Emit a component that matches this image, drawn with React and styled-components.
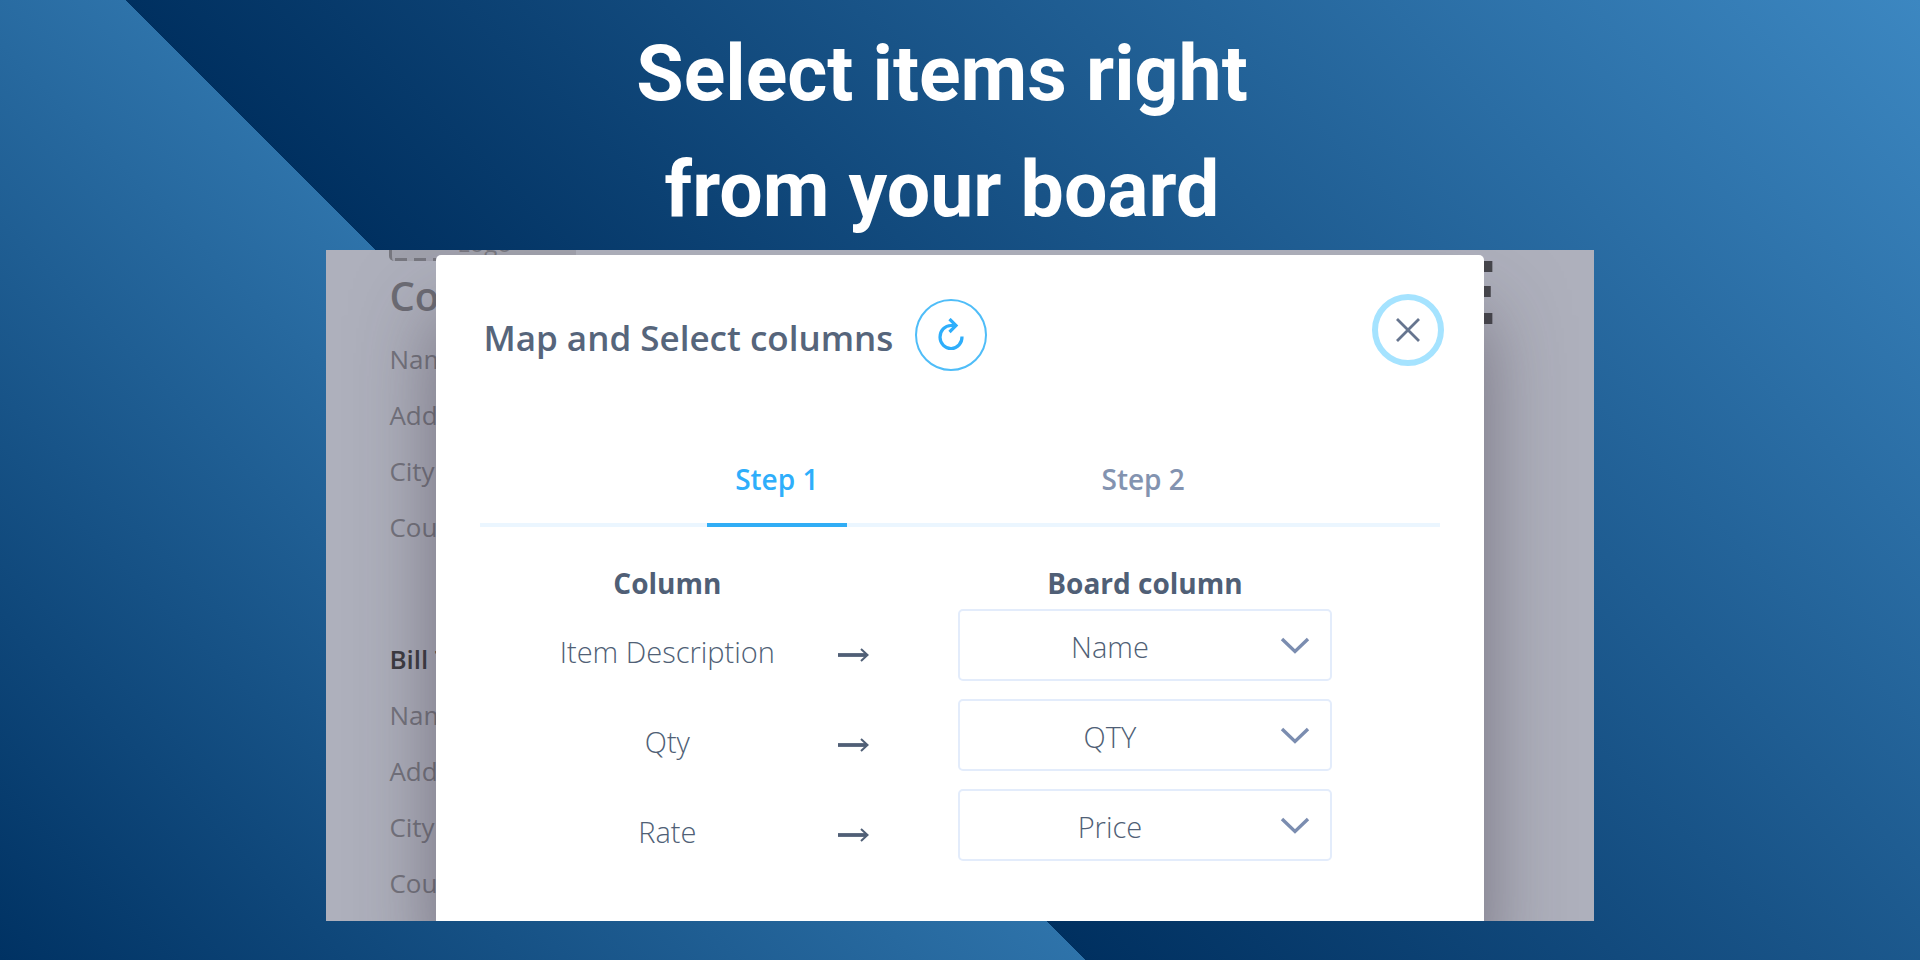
import styled, { createGlobalStyle } from 'styled-components'
import { useState } from 'react'

const GlobalStyle = createGlobalStyle`
    * {
        box-sizing:border-box;
    }

    body {
        margin:0;
        font-family:"Open Sans", "Noto Sans", sans-serif;
    }

    button, select {
        font-family:inherit;
    }
`

const Page = styled.main`
    display:flex;
    min-height:100vh;
    padding-bottom:39px;
    align-items:center;
    flex-direction:column;
    background:linear-gradient(45deg, #003263 0%, #2e73aa 37.7%, #003060 37.7%, #3c87c1 100%);
`

const Headline = styled.h1`
    margin:0;
    color:#fff;
    width:100%;
    height:250px;
    font-size:77px;
    font-weight:700;
    line-height:116px;
    text-align:center;
    padding:16px 36px 0 0;
    font-family:Roboto, sans-serif;
`

const Frame = styled.section`
    flex:1;
    width:66%;
    display:grid;
    overflow:hidden;
    background:#aeb0bc;
`

const Invoice = styled.div`
    display:flex;
    grid-area:1/1;
    padding:0 96px 0 63px;
    justify-content:space-between;
`

const LogoBox = styled.div`
    width:187px;
    height:11px;
    display:flex;
    color:#77777f;
    overflow:hidden;
    font-size:24px;
    line-height:26px;
    padding-bottom:5px;
    align-items:flex-end;
    justify-content:center;
    border-left:3px solid #77777f;
    border-bottom-left-radius:5px;
    background:repeating-linear-gradient(90deg, #77777f 0 12px, #a0a1ac 12px 19px) 3px 100%/100% 3px no-repeat #a0a1ac;
`

const Company = styled.h2`
    margin:0;
    color:#6c6c74;
    font-size:40px;
    font-weight:600;
    line-height:70px;
`

const Line = styled.p`
    margin:0;
    font-size:26px;
    line-height:56px;
    color:${props => props.$strong ? '#3b3b40' : '#74747d'};
    font-weight:${props => props.$strong ? 600 : 400};
`

const Address = styled.div`
    margin-bottom:76px;
`

const InvoiceTitle = styled.h2`
    margin:0;
    color:#46464c;
    font-size:88px;
    font-weight:700;
    line-height:80px;
`

const Overlay = styled.div`
    z-index:1;
    display:flex;
    grid-area:1/1;
    padding:5px 110px 0;
`

const Modal = styled.div`
    flex:1;
    background:#fff;
    padding:0 44px;
    border-radius:5px 5px 0 0;
    box-shadow:0 60px 80px rgba(60, 50, 65, 0.5);
`

const ModalHeader = styled.header`
    display:flex;
    height:202px;
    padding-top:39px;
    margin-right:-4px;
    align-items:flex-start;
    justify-content:space-between;
`

const TitleGroup = styled.div`
    gap:22px;
    display:flex;
    align-items:center;
    padding:5px 0 0 3px;
`

const Title = styled.h2`
    margin:0;
    color:#56657b;
    font-size:35px;
    font-weight:600;
    line-height:64px;
    padding-top:6px;
`

const RoundButton = styled.button`
    padding:0;
    width:72px;
    height:72px;
    display:flex;
    cursor:pointer;
    color:${props => props.$color};
    background:#fff;
    border-radius:50%;
    align-items:center;
    justify-content:center;
    border:${props => props.$border};
`

const Tabs = styled.div`
    display:flex;
    justify-content:space-evenly;
    border-bottom:4px solid #ebf6ff;
`

const Tab = styled.button`
    border:0;
    width:140px;
    height:70px;
    cursor:pointer;
    font-size:28px;
    background:none;
    line-height:36px;
    margin-bottom:-4px;
    padding:0 0 22px;
    color:${props => props.$active ? '#2eaefb' : '#8393b0'};
    font-weight:600;
    border-bottom:4px solid ${props => props.$active ? '#31adf5' : 'transparent'};
`

const Mapping = styled.table`
    color:#505f76;
    table-layout:fixed;
    margin:0 0 0 46px;
    border-spacing:0;
    width:calc(100% - 154px);
`

const HeadCell = styled.th`
    font-size:28px;
    font-weight:700;
    line-height:40px;
    padding:36px 0 6px;
    width:${props => props.$width};
`

const Cell = styled.td`
    padding:0 0 4px;
    height:90px;
    font-size:29px;
    font-weight:300;
    line-height:40px;
    text-align:center;
`

const ArrowCell = styled(Cell)`
    padding-right:60px;

    svg {
        display:block;
        margin:6px auto 0;
    }
`

const SelectCell = styled(Cell)`
    padding:0;
    vertical-align:top;
`

const SelectBox = styled.div`
    display:grid;
    align-items:center;

    svg {
        grid-area:1/1;
        margin-right:22px;
        justify-self:end;
        pointer-events:none;
    }
`

const Select = styled.select`
    width:100%;
    height:72px;
    color:#505f76;
    grid-area:1/1;
    appearance:none;
    font-size:29px;
    font-weight:300;
    background:#fff;
    border-radius:5px;
    padding:2px 70px 0 0;
    text-align:center;
    text-align-last:center;
    border:2px solid #e3ecfb;
`

const RefreshIcon = () => (
    <svg width="28" height="34" viewBox="0 0 28 34" fill="none" stroke="currentColor" strokeWidth="3.200">
        <path d="M25 18.500A11 11.500 0 1 1 14 7.500h3" />
        <path d="M12.500 1l6.500 6.500-6.500 6.500" />
    </svg>
)

const CloseIcon = () => (
    <svg width="26" height="26" viewBox="0 0 26 26" fill="none" stroke="currentColor" strokeWidth="2.800">
        <path d="M2 2l22 22M24 2L2 24" />
    </svg>
)

const ArrowIcon = () => (
    <svg width="32" height="14" viewBox="0 0 32 14" fill="none" stroke="#505f76">
        <path d="M1 7h28" strokeWidth="3.800" />
        <path d="M24 1l6.500 6-6.500 6" strokeWidth="2" />
    </svg>
)

const ChevronIcon = () => (
    <svg width="30" height="18" viewBox="0 0 30 18" fill="none" stroke="#7b8db0" strokeWidth="3.400">
        <path d="M2 3l13 12.500L28 3" />
    </svg>
)

const boardColumns = ['Name', 'QTY', 'Price']

const rows = [
    { id: 'description', label: 'Item Description', board: 'Name' },
    { id: 'qty', label: 'Qty', board: 'QTY' },
    { id: 'rate', label: 'Rate', board: 'Price' }
]

function App() {

    const [step, setStep] = useState(1)

    return (
        <>
            <GlobalStyle />
            <Page>
                <Headline>Select items right<br />from your board</Headline>
                <Frame>
                    <Invoice>
                        <div>
                            <LogoBox>Logo</LogoBox>
                            <Company>Co.</Company>
                            <Address>
                                <Line>Name</Line>
                                <Line>Address</Line>
                                <Line>City</Line>
                                <Line>Country</Line>
                            </Address>
                            <Line $strong>Bill To</Line>
                            <Line>Name</Line>
                            <Line>Address</Line>
                            <Line>City</Line>
                            <Line>Country</Line>
                        </div>
                        <InvoiceTitle>INVOICE</InvoiceTitle>
                    </Invoice>
                    <Overlay>
                        <Modal role="dialog" aria-labelledby="modal-title">
                            <ModalHeader>
                                <TitleGroup>
                                    <Title id="modal-title">Map and Select columns</Title>
                                    <RoundButton aria-label="Refresh" $color="#2eaefb" $border="2px solid #4fbdf8">
                                        <RefreshIcon />
                                    </RoundButton>
                                </TitleGroup>
                                <RoundButton aria-label="Close" $color="#66758f" $border="6px solid #a5e3ff">
                                    <CloseIcon />
                                </RoundButton>
                            </ModalHeader>
                            <Tabs role="tablist">
                                <Tab role="tab" $active={step === 1} onClick={() => setStep(1)}>Step 1</Tab>
                                <Tab role="tab" $active={step === 2} onClick={() => setStep(2)}>Step 2</Tab>
                            </Tabs>
                            <Mapping>
                                <thead>
                                    <tr>
                                        <HeadCell $width="35%">Column</HeadCell>
                                        <HeadCell $width="150px" />
                                        <HeadCell>Board column</HeadCell>
                                    </tr>
                                </thead>
                                <tbody>
                                    {rows.map(row => (
                                        <tr key={row.id}>
                                            <Cell><label htmlFor={row.id}>{row.label}</label></Cell>
                                            <ArrowCell><ArrowIcon /></ArrowCell>
                                            <SelectCell>
                                                <SelectBox>
                                                    <Select id={row.id} defaultValue={row.board}>
                                                        {boardColumns.map(name => <option key={name}>{name}</option>)}
                                                    </Select>
                                                    <ChevronIcon />
                                                </SelectBox>
                                            </SelectCell>
                                        </tr>
                                    ))}
                                </tbody>
                            </Mapping>
                        </Modal>
                    </Overlay>
                </Frame>
            </Page>
        </>
    )
}

export default App
